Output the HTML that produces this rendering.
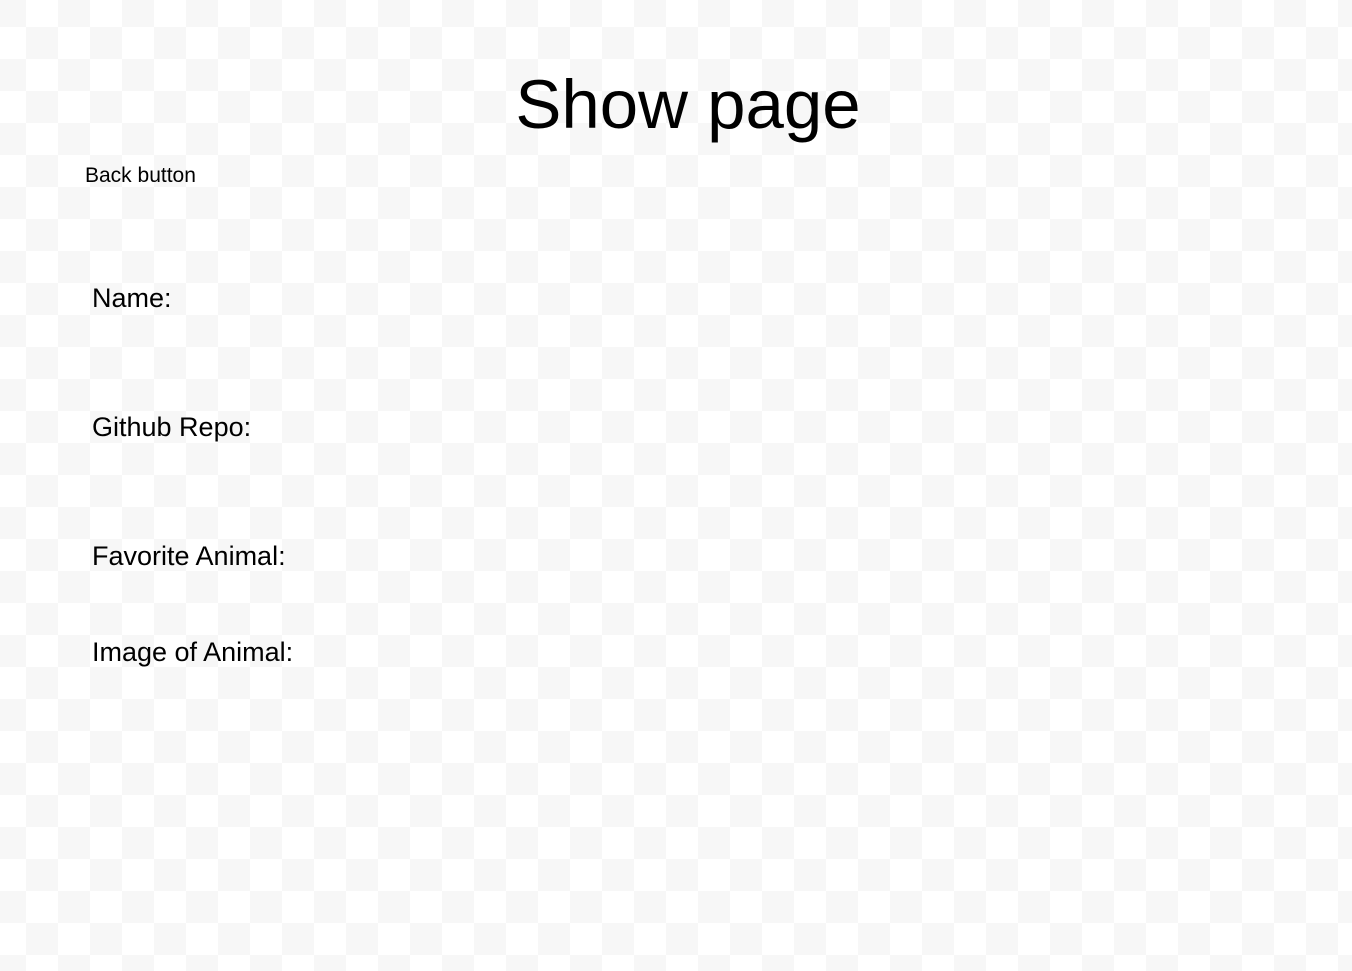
<!DOCTYPE html>
<html><head><meta charset="utf-8"><style>
html,body{margin:0;padding:0;}
body{width:1352px;height:971px;overflow:hidden;position:relative;font-family:"Liberation Sans",Arial,sans-serif;color:#000;
background-color:#fff;
background-image:linear-gradient(45deg,#f7f7f7 25%,transparent 25%,transparent 75%,#f7f7f7 75%),linear-gradient(45deg,#f7f7f7 25%,transparent 25%,transparent 75%,#f7f7f7 75%);
background-size:64px 64px;background-position:26px -5px,-6px 27px;}
div{position:absolute;white-space:nowrap;line-height:normal;}
</style></head><body>
<div style="left:0;width:1376px;text-align:center;top:65px;font-size:69px;">Show page</div>
<div style="left:85px;top:164px;font-size:21px;">Back button</div>
<div style="left:92px;top:283px;font-size:27px;">Name:</div>
<div style="left:92px;top:412px;font-size:27px;">Github Repo:</div>
<div style="left:92px;top:541px;font-size:27px;">Favorite Animal:</div>
<div style="left:92px;top:637px;font-size:27px;">Image of Animal:</div>
</body></html>
